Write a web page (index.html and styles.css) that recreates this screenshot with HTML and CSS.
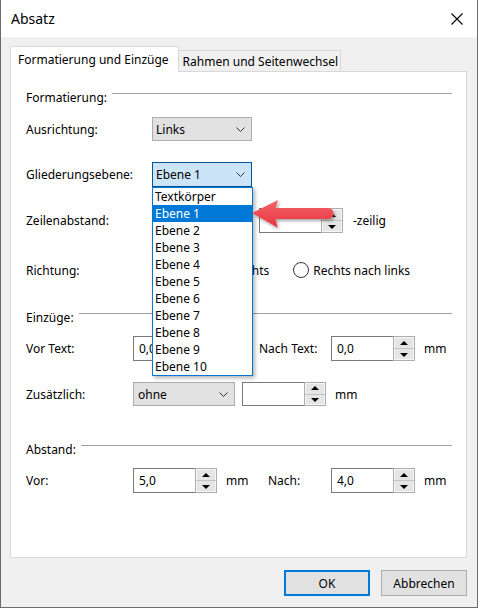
FILE: index.html
```html
<!DOCTYPE html>
<html lang="de">
<head>
    <meta charset="UTF-8">
    <title>Absatz</title>
    <link rel="stylesheet" href="styles.css">
</head>
<body>
    <div class="window">
        <div class="titlebar">
            <span class="title">Absatz</span>
            <svg class="close" width="12" height="12" viewBox="0 0 12 12">
                <path d="M0.5 0.5 L11.5 11.5 M11.5 0.5 L0.5 11.5" stroke="#000" stroke-width="1.1" fill="none"/>
            </svg>
        </div>

        <div class="client">
            <div class="tabs">
                <div class="tab active">Formatierung und Einzüge</div>
                <div class="tab">Rahmen und Seitenwechsel</div>
            </div>

            <div class="panel">
                <!-- Formatierung -->
                <div class="group group-format">
                    <div class="group-head"><span>Formatierung:</span><div class="rule"></div></div>

                    <div class="row row-first">
                        <span class="lbl">Ausrichtung:</span>
                        <div class="select">
                            <span class="sel-text">Links</span>
                            <svg class="chev" width="9" height="5" viewBox="0 0 9 5"><polyline points="0.5,0.5 4.5,4.5 8.5,0.5" fill="none" stroke="#333"/></svg>
                        </div>
                    </div>

                    <div class="row">
                        <span class="lbl">Gliederungsebene:</span>
                        <div class="combo-wrap">
                            <div class="select focus">
                                <span class="sel-text">Ebene 1</span>
                                <svg class="chev" width="9" height="5" viewBox="0 0 9 5"><polyline points="0.5,0.5 4.5,4.5 8.5,0.5" fill="none" stroke="#333"/></svg>
                            </div>
                            <ul class="droplist">
                                <li>Textkörper</li>
                                <li class="picked">Ebene 1</li>
                                <li>Ebene 2</li>
                                <li>Ebene 3</li>
                                <li>Ebene 4</li>
                                <li>Ebene 5</li>
                                <li>Ebene 6</li>
                                <li>Ebene 7</li>
                                <li>Ebene 8</li>
                                <li>Ebene 9</li>
                                <li>Ebene 10</li>
                            </ul>
                            <svg class="pointer" width="92" height="40" viewBox="0 0 92 40">
                                <defs>
                                    <linearGradient id="redFill" x1="0" y1="0" x2="0" y2="1">
                                        <stop offset="0" stop-color="#f7646a"/>
                                        <stop offset="1" stop-color="#e6353e"/>
                                    </linearGradient>
                                    <filter id="soft" x="-20%" y="-30%" width="140%" height="170%">
                                        <feDropShadow dx="1.5" dy="2" stdDeviation="1.5" flood-color="#000" flood-opacity="0.35"/>
                                    </filter>
                                </defs>
                                <path d="M4 17 L30 4 L27.5 12 L80 12 A5.5 5.5 0 0 1 80 23 L27.5 23 L29.5 31.5 Z" fill="url(#redFill)" filter="url(#soft)"/>
                            </svg>
                        </div>
                    </div>

                    <div class="row">
                        <span class="lbl">Zeilenabstand:</span>
                        <!-- hidden behind the open list -->
                        <div class="select"></div>
                        <div class="spin spin-after-select">
                            <span class="edit"></span>
                            <span class="arrows"><span class="arr"><i class="up"></i></span><span class="arr"><i class="down"></i></span></span>
                        </div>
                        <span class="unit unit-zeilig">-zeilig</span>
                    </div>

                    <div class="row row-radio">
                        <span class="lbl">Richtung:</span>
                        <span class="radio"><span class="dot"></span>Links nach rechts</span>
                        <span class="radio radio-second"><span class="dot"></span>Rechts nach links</span>
                    </div>
                </div>

                <!-- Einzüge -->
                <div class="group group-indent">
                    <div class="group-head"><span>Einzüge:</span><div class="rule"></div></div>

                    <div class="row row-first">
                        <span class="lbl">Vor Text:</span>
                        <div class="spin">
                            <span class="edit">0,0</span>
                            <span class="arrows"><span class="arr"><i class="up"></i></span><span class="arr"><i class="down"></i></span></span>
                        </div>
                        <span class="unit-gap"></span>
                        <span class="lbl2">Nach Text:</span>
                        <div class="spin">
                            <span class="edit">0,0</span>
                            <span class="arrows"><span class="arr"><i class="up"></i></span><span class="arr"><i class="down"></i></span></span>
                        </div>
                        <span class="unit">mm</span>
                    </div>

                    <div class="row row-short">
                        <span class="lbl">Zusätzlich:</span>
                        <div class="select select-wide">
                            <span class="sel-text">ohne</span>
                            <svg class="chev" width="9" height="5" viewBox="0 0 9 5"><polyline points="0.5,0.5 4.5,4.5 8.5,0.5" fill="none" stroke="#333"/></svg>
                        </div>
                        <div class="spin spin-after-select">
                            <span class="edit"></span>
                            <span class="arrows"><span class="arr"><i class="up"></i></span><span class="arr"><i class="down"></i></span></span>
                        </div>
                        <span class="unit">mm</span>
                    </div>
                </div>

                <!-- Abstand -->
                <div class="group group-indent group-spacing">
                    <div class="group-head"><span>Abstand:</span><div class="rule"></div></div>

                    <div class="row row-first">
                        <span class="lbl">Vor:</span>
                        <div class="spin">
                            <span class="edit">5,0</span>
                            <span class="arrows"><span class="arr"><i class="up"></i></span><span class="arr"><i class="down"></i></span></span>
                        </div>
                        <span class="unit unit-mm">mm</span>
                        <span class="lbl2 lbl2-short">Nach:</span>
                        <div class="spin">
                            <span class="edit">4,0</span>
                            <span class="arrows"><span class="arr"><i class="up"></i></span><span class="arr"><i class="down"></i></span></span>
                        </div>
                        <span class="unit">mm</span>
                    </div>
                </div>
            </div>

            <div class="buttons">
                <button class="btn default">OK</button>
                <button class="btn">Abbrechen</button>
            </div>
        </div>
    </div>
</body>
</html>
```

FILE: styles.css
```css
body {
    margin: 0;
    font-family: "Noto Sans", "Segoe UI", sans-serif;
    font-size: 12px;
    color: #000;
    background: #fff;
}
.window {
    width: 478px;
    height: 608px;
    box-sizing: border-box;
    border: 1px solid #6b6b6b;
    border-top: none;
    background-color: #f0f0f0;
    display: flex;
    flex-direction: column;
}

/* Title bar */
.titlebar {
    height: 37px;
    flex: none;
    background-color: #fff;
    display: flex;
    align-items: center;
    justify-content: space-between;
    padding: 0 14px 0 10px;
}
.title {
    font-size: 14px;
}

/* Client area */
.client {
    flex: 1;
    padding: 9px 10px 0 9px;
    display: flex;
    flex-direction: column;
}
.tabs {
    display: flex;
    align-items: flex-end;
    height: 25px;
}
.tab {
    height: 21px;
    box-sizing: border-box;
    line-height: 22px;
    padding: 0 2px 0 4px;
    border: 1px solid #d9d9d9;
    border-bottom: none;
    border-left: none;
    background-color: #f0f0f0;
    white-space: nowrap;
}
.tab.active {
    height: 26px;
    line-height: 25px;
    margin-bottom: -1px;
    padding: 0 9px 0 7px;
    border-left: 1px solid #d9d9d9;
    background-color: #fff;
    position: relative;
    z-index: 1;
}
.panel {
    height: 487px;
    box-sizing: border-box;
    background-color: #fff;
    border: 1px solid #d9d9d9;
    padding: 16px 14px 0 15px;
}

/* Groups */
.group-head {
    display: flex;
    align-items: flex-start;
    height: 20px;
    line-height: 20px;
}
.rule {
    flex: 1;
    margin: 5px 0 0 5px;
    border-top: 1px solid #a0a0a0;
}
.group + .group {
    margin-top: 26px;
}
.group-spacing {
    margin-top: 34px !important;
}
.row {
    display: flex;
    align-items: center;
    height: 25px;
    margin-top: 21px;
    white-space: nowrap;
}
.row-first {
    margin-top: 8px;
}
.group-format .row-first {
    height: 24px;
    margin-top: 9px;
}
.row-radio {
    height: 24px;
    margin-top: 25px;
}
.row-short {
    height: 24px;
}
.lbl {
    width: 126px;
    flex: none;
}
.group-indent .lbl {
    width: 107px;
}
.lbl2 {
    width: 72px;
    flex: none;
}
.lbl2-short {
    width: 63px;
}

/* Combo boxes */
.select {
    width: 100px;
    height: 100%;
    box-sizing: border-box;
    flex: none;
    display: flex;
    align-items: center;
    justify-content: space-between;
    padding: 0 6px 0 3px;
    border: 1px solid #adadad;
    background-color: #e1e1e1;
}
.select.focus {
    border-color: #005499;
    background-color: #cce4f7;
}
.select-wide {
    width: 102px;
    padding-left: 4px;
}
.combo-wrap {
    position: relative;
    height: 100%;
}
.droplist {
    position: absolute;
    top: 100%;
    left: 0;
    width: 101px;
    box-sizing: border-box;
    margin: 0;
    padding: 0;
    list-style: none;
    background-color: #fff;
    border: 1px solid #0078d7;
    box-shadow: 2px 2px 4px rgba(0, 0, 0, 0.3);
    z-index: 2;
}
.droplist li {
    height: 17px;
    line-height: 17px;
    padding-left: 2px;
}
.droplist li.picked {
    background-color: #0078d7;
    color: #fff;
}
.pointer {
    position: absolute;
    left: 96px;
    top: 34px;
    z-index: 3;
    overflow: visible;
}

/* Spin boxes */
.spin {
    width: 84px;
    height: 100%;
    flex: none;
    display: flex;
    box-sizing: border-box;
}
.spin-after-select {
    margin-left: 7px;
}
.spin .edit {
    flex: 1;
    border: 1px solid #7a7a7a;
    border-right: none;
    background-color: #fff;
    padding-left: 5px;
    line-height: 23px;
}
.spin .arrows {
    width: 22px;
    box-sizing: border-box;
    display: flex;
    flex-direction: column;
    border: 1px solid #adadad;
    background-color: #e5e5e5;
    box-shadow: inset 0 0 0 1px #f7f7f7;
}
.arr {
    flex: 1;
    display: flex;
    align-items: center;
    justify-content: center;
}
.arr + .arr {
    border-top: 1px solid #c4c4c4;
}
.up, .down {
    width: 0;
    height: 0;
    border-left: 4px solid transparent;
    border-right: 4px solid transparent;
}
.up {
    border-bottom: 4px solid #000;
}
.down {
    border-top: 4px solid #000;
}
.unit {
    padding-left: 9px;
}
.unit-zeilig {
    padding-left: 10px;
}
/* "mm" under the open list is covered, only keep its room */
.unit-gap {
    width: 42px;
    flex: none;
}
.unit-mm {
    width: 42px;
    flex: none;
}

/* Radio buttons */
.radio {
    display: flex;
    align-items: center;
    gap: 4px;
}
.radio .dot {
    width: 16px;
    height: 16px;
    box-sizing: border-box;
    border: 1px solid #333;
    border-radius: 50%;
    background-color: #fff;
}
.radio-second {
    margin-left: 24px;
}

/* Dialog buttons */
.buttons {
    display: flex;
    justify-content: flex-end;
    gap: 11px;
    margin-top: 12px;
}
.btn {
    width: 86px;
    height: 26px;
    box-sizing: border-box;
    font-family: inherit;
    font-size: 12px;
    color: #000;
    background-color: #e1e1e1;
    border: 1px solid #adadad;
    padding: 0;
}
.btn.default {
    border: 2px solid #0078d7;
}
```
